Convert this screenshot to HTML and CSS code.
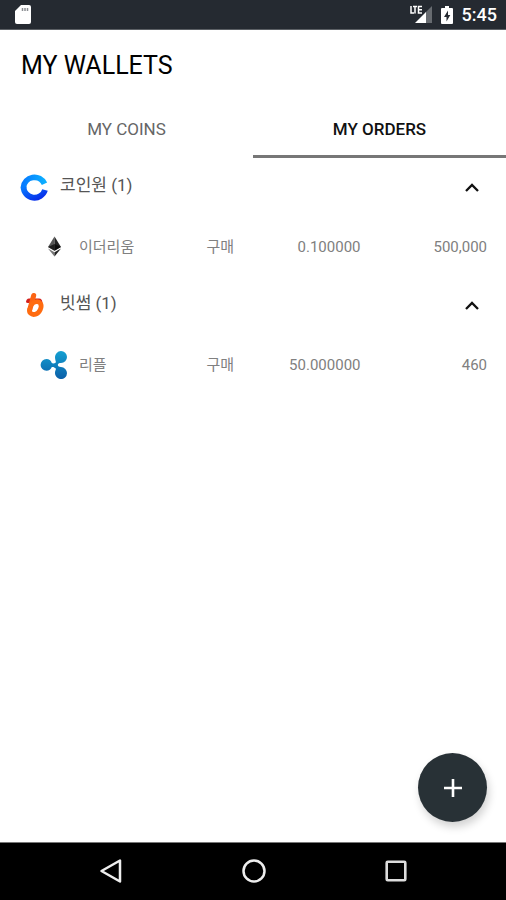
FILE: index.html
```html
<!DOCTYPE html>
<html lang="ko">
<head>
<meta charset="utf-8">
<meta name="viewport" content="width=device-width, initial-scale=1">
<title>My Wallets</title>
<link rel="stylesheet" href="styles.css">
</head>
<body>
<div class="status-bar">
  <svg class="icon-sd" viewBox="0 0 16 19" aria-hidden="true">
    <path d="M6 0h8a2 2 0 0 1 2 2v15a2 2 0 0 1-2 2H2a2 2 0 0 1-2-2V6z" fill="#fff"/>
    <path d="M7.500 3v3M10 3v3M12.500 3v3" stroke="#8b8e92" stroke-width="1.500"/>
  </svg>
  <div class="status-right">
    <svg class="icon-signal" viewBox="0 0 22 19" aria-hidden="true">
      <path d="M22 1V18H15V8z" fill="#676b70"/>
      <path d="M16 7V18H5z" fill="#fff"/>
      <path d="M1 1v7h3M3 1.500h4M5 1.500V8.500M12 1.500H8.500V8H12M8.500 4.700H12" fill="none" stroke="#fff" stroke-width="1.500"/>
    </svg>
    <svg class="icon-battery" viewBox="0 0 12 18" aria-hidden="true">
      <path d="M4 0h4v2h3a1 1 0 0 1 1 1v14a1 1 0 0 1-1 1H1a1 1 0 0 1-1-1V3a1 1 0 0 1 1-1h3z" fill="#fff"/>
      <path d="M7 4.500 3 11h2.500v4.500L9.300 9H7z" fill="#252a31"/>
    </svg>
    <time class="clock">5:45</time>
  </div>
</div>

<header class="app-header">
  <h1 class="title">MY WALLETS</h1>
</header>

<nav class="tabs">
  <button class="tab" type="button">MY COINS</button>
  <button class="tab tab-active" type="button" aria-current="page">MY ORDERS</button>
</nav>

<main class="orders">
  <section class="exchange">
    <button class="exchange-header" type="button" aria-expanded="true">
      <svg class="logo" viewBox="0 0 28 28" aria-hidden="true">
        <defs>
          <linearGradient id="coinone-top" x1="0" y1="0" x2="1" y2="0">
            <stop offset="0" stop-color="#087cff"/><stop offset="1" stop-color="#0baeff"/>
          </linearGradient>
          <linearGradient id="coinone-bottom" x1="0" y1="0" x2="1" y2="1">
            <stop offset="0" stop-color="#087cff"/><stop offset="1" stop-color="#0828e8"/>
          </linearGradient>
        </defs>
        <path d="M3.500 14.500A11 11 0 0 1 24.500 10.800" fill="none" stroke="url(#coinone-top)" stroke-width="5.800"/>
        <path d="M3.500 14A11 11 0 0 0 25 17" fill="none" stroke="url(#coinone-bottom)" stroke-width="5.800"/>
      </svg>
      <span class="exchange-name">코인원 (1)</span>
      <svg class="chevron" viewBox="0 0 14 9" aria-hidden="true"><path d="M1 8l6-6 6 6" fill="none" stroke="#111" stroke-width="2.300"/></svg>
    </button>
    <table class="order-table">
      <tbody>
        <tr>
          <td class="coin">
            <div class="coin-cell">
              <svg class="coin-icon" viewBox="0 0 28 28" aria-hidden="true">
                <path d="M14.500 3.500 8 14 14.500 17.800z" fill="#555"/>
                <path d="M14.500 3.500v14.300L21 14z" fill="#222"/>
                <path d="M8 14 14.500 11l6.500 3-6.500 3.800z" fill="#000" opacity=".65"/>
                <path d="M8 15.500 14.500 23.500v-4.300z" fill="#777"/>
                <path d="M21 15.500 14.500 23.500v-4.300z" fill="#222"/>
              </svg>
              <span>이더리움</span>
            </div>
          </td>
          <td>구매</td>
          <td>0.100000</td>
          <td>500,000</td>
        </tr>
      </tbody>
    </table>
  </section>

  <section class="exchange">
    <button class="exchange-header" type="button" aria-expanded="true">
      <svg class="logo" viewBox="0 0 28 28" aria-hidden="true">
        <path d="M6 11Q6.300 7.500 9 7.500H19Q22.500 7.500 22.300 12H8Q6.200 12 6 11z" fill="#d4201c"/>
        <path d="M13.700 4.500 9.800 18.500" stroke="#fb6414" stroke-width="5" fill="none" stroke-linecap="round"/>
        <path d="M11.500 13.500C14 10.500 18.500 9.500 20.500 12.500C22.500 16 19.500 22 15.500 23.200C11.500 24.300 8.500 21.500 9.800 18" fill="none" stroke="#ff6c10" stroke-width="4.800" stroke-linecap="round"/>
      </svg>
      <span class="exchange-name">빗썸 (1)</span>
      <svg class="chevron" viewBox="0 0 14 9" aria-hidden="true"><path d="M1 8l6-6 6 6" fill="none" stroke="#111" stroke-width="2.300"/></svg>
    </button>
    <table class="order-table">
      <tbody>
        <tr>
          <td class="coin">
            <div class="coin-cell">
              <svg class="coin-icon" viewBox="0 0 28 28" aria-hidden="true">
                <defs>
                  <linearGradient id="ripple" x1="0" y1="0" x2="0" y2="1">
                    <stop offset="0" stop-color="#14a0d2"/><stop offset="1" stop-color="#0b5fa8"/>
                  </linearGradient>
                </defs>
                <path fill="url(#ripple)" d="M6.500 8C9 8 11 9.500 11.800 12C12.800 12.800 14.500 12.500 15.800 11.500C16.200 10.300 15 9 15 6.200A6 6 0 1 1 21 12.100C19 12.100 18 12.500 17.800 14C18 15.300 19 15.800 21 16.100A6 6 0 1 1 15 21.700C15 19.700 16.200 18.500 15.800 17.500C14.500 16.200 12.800 15.500 11.800 16.100C11 18.500 9 19.800 6.500 19.800A5.900 5.900 0 0 1 6.500 8Z"/>
              </svg>
              <span>리플</span>
            </div>
          </td>
          <td>구매</td>
          <td>50.000000</td>
          <td>460</td>
        </tr>
      </tbody>
    </table>
  </section>
</main>

<div class="fab-row">
  <button class="fab" type="button" aria-label="Add order">
    <svg class="plus" viewBox="0 0 18 18" aria-hidden="true"><path d="M9 0v18M0 9h18" stroke="#fff" stroke-width="2.600"/></svg>
  </button>
</div>

<footer class="nav-bar">
  <button class="nav-button" type="button" aria-label="Back">
    <svg viewBox="0 0 24 24" aria-hidden="true"><path d="M21 1.500v21L2.500 12z" fill="none" stroke="#eee" stroke-width="2.500" stroke-linejoin="round"/></svg>
  </button>
  <button class="nav-button" type="button" aria-label="Home">
    <svg viewBox="0 0 24 24" aria-hidden="true"><circle cx="12" cy="12" r="10.500" fill="none" stroke="#eee" stroke-width="2.500"/></svg>
  </button>
  <button class="nav-button" type="button" aria-label="Recent apps">
    <svg viewBox="0 0 24 24" aria-hidden="true"><rect x="2.700" y="2.700" width="18.600" height="18.600" rx="1" fill="none" stroke="#ddd" stroke-width="2.600"/></svg>
  </button>
</footer>
</body>
</html>
```
FILE: styles.css
```css
* {
  box-sizing: border-box;
}

body {
  display: flex;
  flex-direction: column;
  min-height: 100vh;
  margin: 0;
  background: #fff;
  color: #555;
  font-family: Roboto, "Noto Sans CJK KR", sans-serif;
}

button {
  padding: 0;
  border: 0;
  background: none;
  color: inherit;
  font: inherit;
  cursor: pointer;
}

svg {
  display: block;
  flex: none;
}

.status-bar {
  display: flex;
  align-items: center;
  justify-content: space-between;
  height: 30px;
  padding: 0 9px 0 15px;
  border-bottom: 1px solid #5c6065;
  background: #252a31;
  color: #fff;
}

.status-right {
  display: flex;
  align-items: center;
  gap: 9px;
}

.icon-sd {
  width: 16px;
  height: 19px;
}

.icon-signal {
  width: 22px;
  height: 19px;
}

.icon-battery {
  width: 12px;
  height: 18px;
}

.clock {
  font-size: 18px;
  font-weight: 500;
  line-height: 32px;
}

.app-header {
  padding: 20px 21px 18px;
}

.title {
  margin: 0;
  color: #000;
  font-size: 25px;
  font-weight: 400;
  line-height: 32px;
}

.tabs {
  display: grid;
  grid-template-columns: 1fr 1fr;
}

.tab {
  height: 58px;
  border-top: 3px solid transparent;
  border-bottom: 3px solid transparent;
  color: #666;
  font-size: 17px;
}

.tab-active {
  border-bottom-color: #777;
  color: #111;
  font-weight: 500;
}

.exchange-header {
  display: flex;
  align-items: center;
  gap: 12px;
  width: 100%;
  height: 59px;
  padding: 0 27px 1px 20px;
  text-align: left;
}

.logo,
.coin-icon {
  width: 28px;
  height: 28px;
}

.exchange-name {
  flex: 1;
  padding-bottom: 4px;
  font-size: 17px;
  line-height: 24px;
}

.chevron {
  width: 14px;
  height: 9px;
}

.order-table {
  width: 100%;
  border-collapse: collapse;
  table-layout: fixed;
  color: #808080;
  font-size: 15px;
  line-height: 20px;
}

.order-table td {
  height: 59px;
  padding: 0 19px 0 0;
  text-align: right;
  white-space: nowrap;
}

.order-table .coin {
  padding: 0 0 0 40px;
  text-align: left;
}

.coin-cell {
  display: flex;
  align-items: center;
  gap: 11px;
}

.fab-row {
  display: flex;
  justify-content: flex-end;
  margin-top: auto;
  padding: 20px 19px;
}

.fab {
  display: grid;
  place-items: center;
  width: 69px;
  height: 69px;
  border-radius: 50%;
  background: #283136;
  box-shadow: 2px 5px 9px rgb(0 0 0 / 18%);
}

.plus {
  width: 18px;
  height: 18px;
}

.nav-bar {
  display: flex;
  align-items: center;
  justify-content: space-between;
  height: 58px;
  padding: 0 98px 2px 99px;
  border-top: 1px solid #777;
  background: #000;
}

.nav-button svg {
  width: 24px;
  height: 24px;
}
```
